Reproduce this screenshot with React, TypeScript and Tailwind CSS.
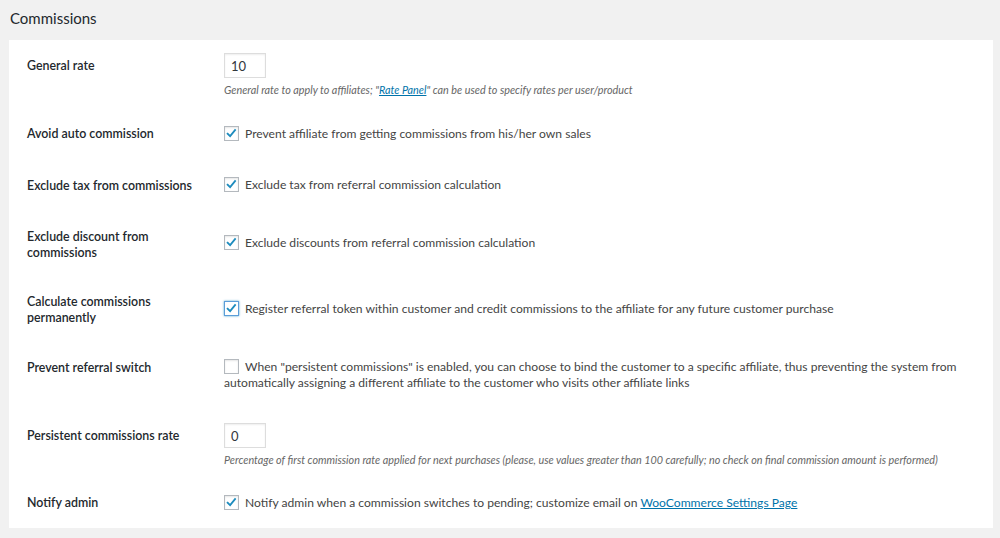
import React from "react";

const font = { fontFamily: '"Lato", "Liberation Sans", sans-serif' };

function Check({ checked, focus }: { checked?: boolean; focus?: boolean }) {
	return (
		<span
			className={`relative mr-[6px] inline-block h-[15px] w-[15px] shrink-0 align-[-3px] border bg-white ${
				focus ? "border-[#5b9dd9] shadow-[0_0_2px_rgba(30,140,190,0.8)]" : "border-[#b4b9be] shadow-[inset_0_1px_2px_rgba(0,0,0,0.1)]"
			}`}
		>
			{checked && (
				<svg viewBox="0 0 16 16" className="absolute left-[0px] top-[0px] h-[13px] w-[13px]">
					<path d="M3.2 8.2 L6.3 11.2 L12.4 3.8" fill="none" stroke="#1e8cbe" strokeWidth="2.2" strokeLinecap="square" />
				</svg>
			)}
		</span>
	);
}

function Row({
	label,
	h,
	lpt,
	cpt,
	children,
}: {
	label: React.ReactNode;
	h: string;
	lpt: string;
	cpt: string;
	children: React.ReactNode;
}) {
	return (
		<div className={`flex ${h}`}>
			<div className={`w-[215px] shrink-0 pl-[18px] pr-[10px] text-[12.4px] font-semibold leading-[16px] text-[#23282d] ${lpt}`}>
				{label}
			</div>
			<div className={`flex-1 pr-[20px] text-[12.1px] leading-[16px] text-[#444] ${cpt}`}>{children}</div>
		</div>
	);
}

function Desc({ children }: { children: React.ReactNode }) {
	return <p className="mt-[5px] text-[10.8px] italic leading-[14px] text-[#666]">{children}</p>;
}

function NumBox({ value }: { value: string }) {
	return (
		<div className="flex h-[25px] w-[42px] items-center border border-[#ddd] px-[6px] text-[13px] text-[#32373c] shadow-[inset_0_1px_2px_rgba(0,0,0,0.07)]">
			{value}
		</div>
	);
}

export default function App() {
	return (
		<div className="min-h-[538px] w-[1000px] bg-[#f1f1f1] pt-[7px]" style={font}>
			<h2 className="pl-[10px] text-[15px] leading-[22px] text-[#23282d]">Commissions</h2>
			<div className="ml-[9px] mt-[11px] w-[984px] bg-white">
				<Row label="General rate" h="h-[70px]" lpt="pt-[18px]" cpt="pt-[13px]">
					<NumBox value="10" />
					<Desc>
						General rate to apply to affiliates; "<a className="text-[#0073aa] underline">Rate Panel</a>" can be used to specify rates per user/product
					</Desc>
				</Row>

				<Row label="Avoid auto commission" h="h-[55px]" lpt="pt-[16px]" cpt="pt-[16px]">
					<Check checked />
					Prevent affiliate from getting commissions from his/her own sales
				</Row>

				<Row label="Exclude tax from commissions" h="h-[50px]" lpt="pt-[13px]" cpt="pt-[12px]">
					<Check checked />
					Exclude tax from referral commission calculation
				</Row>

				<Row
					label={
						<>
							Exclude discount from
							<br />
							commissions
						</>
					}
					h="h-[65px]"
					lpt="pt-[14px]"
					cpt="pt-[20px]"
				>
					<Check checked />
					Exclude discounts from referral commission calculation
				</Row>

				<Row
					label={
						<>
							Calculate commissions
							<br />
							permanently
						</>
					}
					h="h-[65px]"
					lpt="pt-[14px]"
					cpt="pt-[21px]"
				>
					<Check checked focus />
					Register referral token within customer and credit commissions to the affiliate for any future customer purchase
				</Row>

				<Row label="Prevent referral switch" h="h-[60px]" lpt="pt-[15px]" cpt="pt-[14px]">
					<Check />
					When "persistent commissions" is enabled, you can choose to bind the customer to a specific affiliate, thus preventing the system from
					automatically assigning a different affiliate to the customer who visits other affiliate links
				</Row>

				<Row label="Persistent commissions rate" h="h-[70px]" lpt="pt-[23px]" cpt="pt-[18px]">
					<NumBox value="0" />
					<Desc>
						Percentage of first commission rate applied for next purchases (please, use values greater than 100 carefully; no check on final commission amount is performed)
					</Desc>
				</Row>

				<Row label="Notify admin" h="h-[53px]" lpt="pt-[20px]" cpt="pt-[20px]">
					<Check checked />
					Notify admin when a commission switches to pending; customize email on{" "}
					<a className="text-[#0073aa] underline">WooCommerce Settings Page</a>
				</Row>
			</div>
		</div>
	);
}
